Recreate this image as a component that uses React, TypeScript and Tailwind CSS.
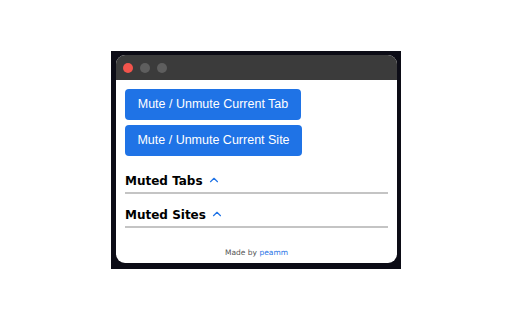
import { ChevronUp } from 'lucide-react'

const sections = ['Muted Tabs', 'Muted Sites']

export default function App() {
  return (
    <div className="w-[512px] h-[320px] bg-white pt-[51px] pl-[111px]">
      <div className="w-[290px] h-[218px] bg-[#0c0c16] pt-[4px] pl-[5px] pr-[4px] pb-[6px]">
        <div className="w-full h-full bg-white rounded-[9px] overflow-hidden flex flex-col">
          <div className="h-[25px] bg-[#3b3b3b] flex items-center gap-[7px] pl-[7px] shrink-0">
            <span className="w-[10px] h-[10px] rounded-full bg-[#f2544c]" />
            <span className="w-[10px] h-[10px] rounded-full bg-[#5e5e5e]" />
            <span className="w-[10px] h-[10px] rounded-full bg-[#5e5e5e]" />
          </div>
          <div className="flex-1 flex flex-col pl-[9px] pr-[9px] pt-[9px]">
            <div className="flex flex-col gap-[5px] items-start">
              <button className="w-[176px] h-[31px] rounded-[4px] bg-[#1f73e6] text-white text-[12.5px] font-['Liberation_Sans',Arial,sans-serif]">
                Mute / Unmute Current Tab
              </button>
              <button className="w-[177px] h-[31px] rounded-[4px] bg-[#1f73e6] text-white text-[12.5px] font-['Liberation_Sans',Arial,sans-serif]">
                Mute / Unmute Current Site
              </button>
            </div>
            <div className="mt-[4px] flex flex-col">
              {sections.map((s) => (
                <div key={s} className="border-b-[2px] border-[#c4c4c4] pt-[15px] pb-[5px] flex items-center gap-[4px] w-[263px]">
                  <span className="text-[12px] font-bold text-black font-['DejaVu_Sans',Verdana,sans-serif] leading-[12px]">
                    {s}
                  </span>
                  <ChevronUp className="w-[14px] h-[14px] text-[#1f73e6] -mt-[3px]" strokeWidth={2} />
                </div>
              ))}
            </div>
            <div className="mt-auto pb-[7px] text-center text-[7.5px] leading-none text-[#555] font-['DejaVu_Sans',Verdana,sans-serif]">
              Made by <span className="text-[#1f73e6]">peamm</span>
            </div>
          </div>
        </div>
      </div>
    </div>
  )
}
